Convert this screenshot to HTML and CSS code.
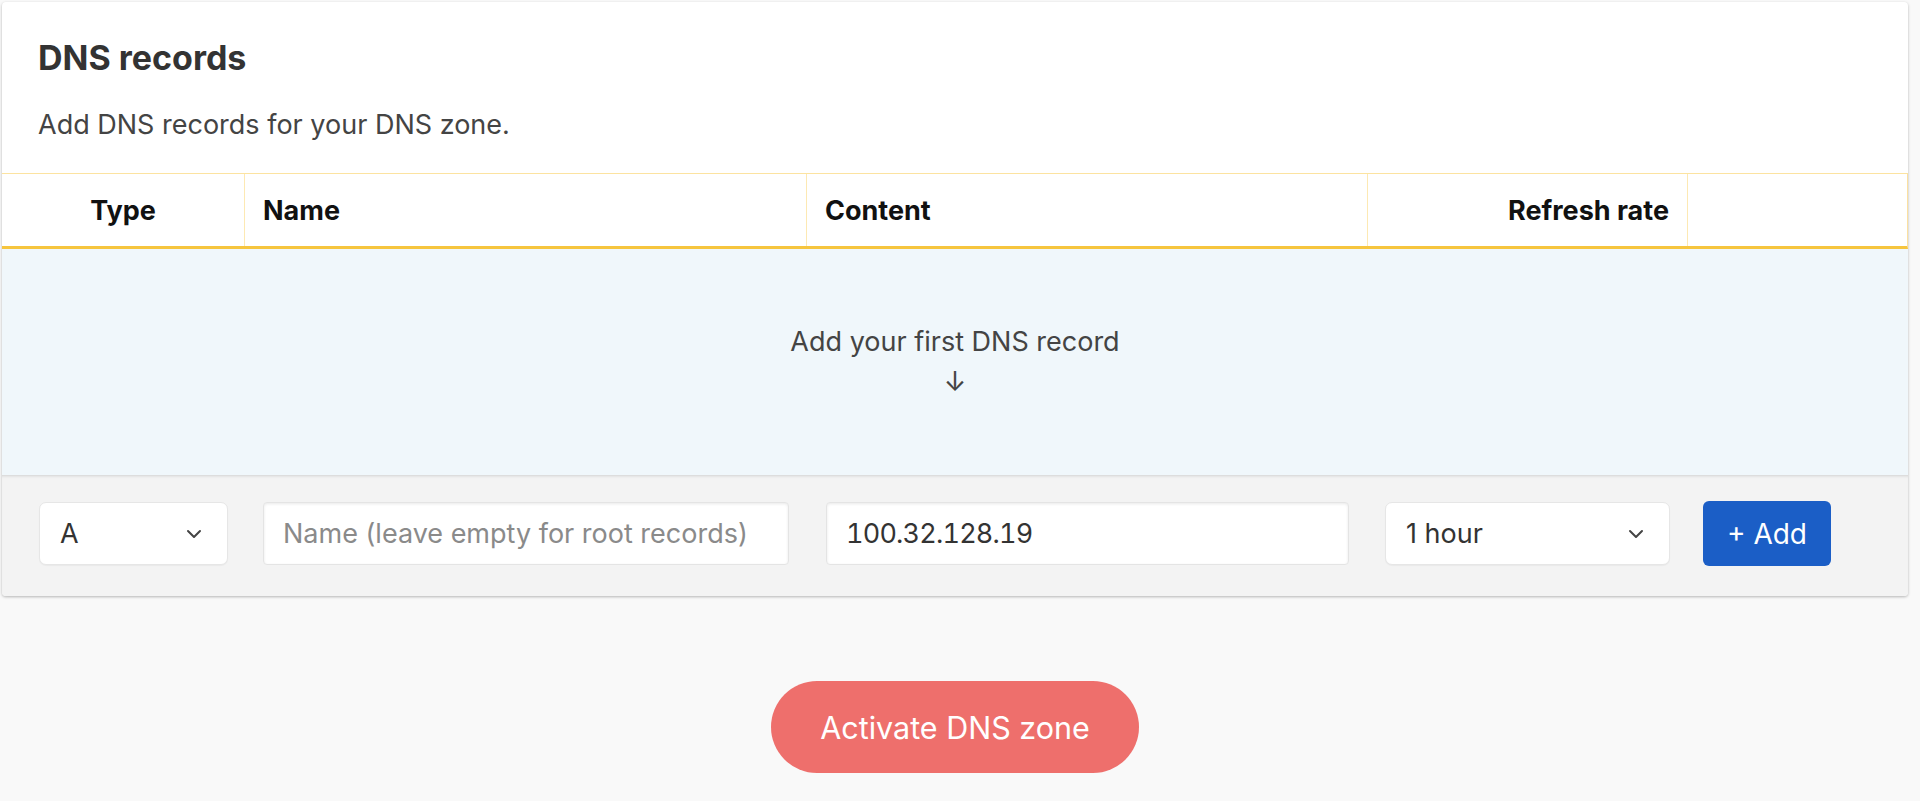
FILE: index.html
```html
<!DOCTYPE html>
<html lang="en">
<head>
<meta charset="utf-8">
<title>DNS records</title>
<link rel="stylesheet" href="styles.css">
</head>
<body>
<div class="page">
  <section class="card">
    <div class="card-head">
      <h2 class="title">DNS records</h2>
      <p class="subtitle">Add DNS records for your DNS zone.</p>
    </div>
    <div class="table">
      <div class="thead">
        <div class="th th-center">Type</div>
        <div class="th">Name</div>
        <div class="th">Content</div>
        <div class="th th-right">Refresh rate</div>
        <div class="th"></div>
      </div>
      <div class="empty">
        <div>Add your first DNS record</div>
        <div>↓</div>
      </div>
      <div class="form-row">
        <div class="cell cell-type">
          <div class="select">
            <span>A</span>
            <svg class="chev" width="20" height="12" viewBox="0 0 20 12"><path d="M4 3 L10 9 L16 3" fill="none" stroke="#444" stroke-width="2" stroke-linecap="round" stroke-linejoin="round"/></svg>
          </div>
        </div>
        <div class="cell cell-name">
          <input class="field" type="text" placeholder="Name (leave empty for root records)">
        </div>
        <div class="cell cell-content">
          <input class="field field-content" type="text" value="100.32.128.19">
        </div>
        <div class="cell cell-rate">
          <div class="select">
            <span>1 hour</span>
            <svg class="chev" width="20" height="12" viewBox="0 0 20 12"><path d="M4 3 L10 9 L16 3" fill="none" stroke="#444" stroke-width="2" stroke-linecap="round" stroke-linejoin="round"/></svg>
          </div>
        </div>
        <div class="cell cell-add">
          <button class="btn-add" type="button">+ Add</button>
        </div>
      </div>
    </div>
  </section>
  <div class="actions">
    <button class="btn-activate" type="button">Activate DNS zone</button>
  </div>
</div>
</body>
</html>
```
FILE: styles.css
```css
html, body {
  margin: 0;
  padding: 0;
}
body {
  background: #f9f9f9;
  font-family: Inter, "Noto Sans", "Liberation Sans", sans-serif;
  color: #333;
}
.page {
  width: 1906px;
  padding: 2px 0 0 2px;
}
.card {
  background: #fff;
  border-radius: 4px;
  box-shadow: 0 1px 3px rgba(0, 0, 0, 0.28);
  overflow: hidden;
}
.card-head {
  padding: 35px 36px 32px 36px;
}
.title {
  margin: 0;
  font-size: 34px;
  line-height: 41px;
  font-weight: 700;
  color: #333;
}
.subtitle {
  margin: 30px 0 0;
  font-size: 27px;
  line-height: 33px;
  color: #444;
}
.thead,
.form-row {
  display: grid;
  grid-template-columns: 242px 562px 561px 320px 1fr;
}
.thead {
  border-top: 1px solid #fce3a0;
  border-bottom: 3px solid #f6c53e;
  border-right: 1px solid #fbe0a0;
}
.th {
  height: 72px;
  padding: 0 18px;
  display: flex;
  align-items: center;
  font-size: 27px;
  font-weight: 700;
  color: #111;
  border-left: 1px solid #fde9b3;
}
.th:first-child {
  border-left: none;
}
.th-center {
  justify-content: center;
}
.th-right {
  justify-content: flex-end;
}
.empty {
  background: #f0f7fb;
  padding: 73px 0;
  text-align: center;
  font-size: 27px;
  line-height: 40px;
  color: #444;
}
.form-row {
  background: #f3f3f3;
  padding: 26px 0 30px;
  box-shadow: inset 0 3px 3px -2px rgba(0, 0, 0, 0.14);
}
.cell {
  display: flex;
  align-items: center;
}
.cell-type {
  padding: 0 16px 0 37px;
}
.cell-name {
  padding: 0 17px 0 19px;
}
.cell-content {
  padding: 0 18px 0 20px;
}
.cell-rate {
  padding: 0 17px 0 18px;
}
.cell-add {
  padding: 0 0 0 16px;
}
.select {
  flex: 1;
  height: 63px;
  box-sizing: border-box;
  background: #fff;
  border: 1px solid #e6e6e6;
  border-radius: 7px;
  box-shadow: 0 1px 1px rgba(0, 0, 0, 0.04);
  padding: 0 23px 0 20px;
  display: flex;
  align-items: center;
  justify-content: space-between;
  font-size: 27px;
  color: #333;
}
.chev {
  display: block;
}
.field {
  flex: 1;
  width: 100%;
  height: 63px;
  box-sizing: border-box;
  background: #fff;
  border: 1px solid #e4e4e4;
  border-radius: 4px;
  box-shadow: inset 0 1px 3px rgba(0, 0, 0, 0.09);
  padding: 0 19px;
  font-family: Inter, "Noto Sans", "Liberation Sans", sans-serif;
  font-size: 27px;
  color: #333;
  outline: none;
}
.field-content {
  font-variant-numeric: tabular-nums;
  letter-spacing: -0.8px;
}
.field::placeholder {
  color: #8a8a8a;
}
.btn-add {
  width: 128px;
  height: 65px;
  border: none;
  border-radius: 6px;
  background: #1b5ec6;
  color: #fff;
  font-family: Inter, "Noto Sans", "Liberation Sans", sans-serif;
  font-size: 28px;
  padding: 0;
}
.actions {
  display: flex;
  justify-content: center;
  padding-top: 85px;
}
.btn-activate {
  width: 368px;
  height: 92px;
  border: none;
  border-radius: 46px;
  background: #ee6f6c;
  color: #fff;
  font-family: Inter, "Noto Sans", "Liberation Sans", sans-serif;
  font-size: 30.5px;
  padding: 0;
}
```
